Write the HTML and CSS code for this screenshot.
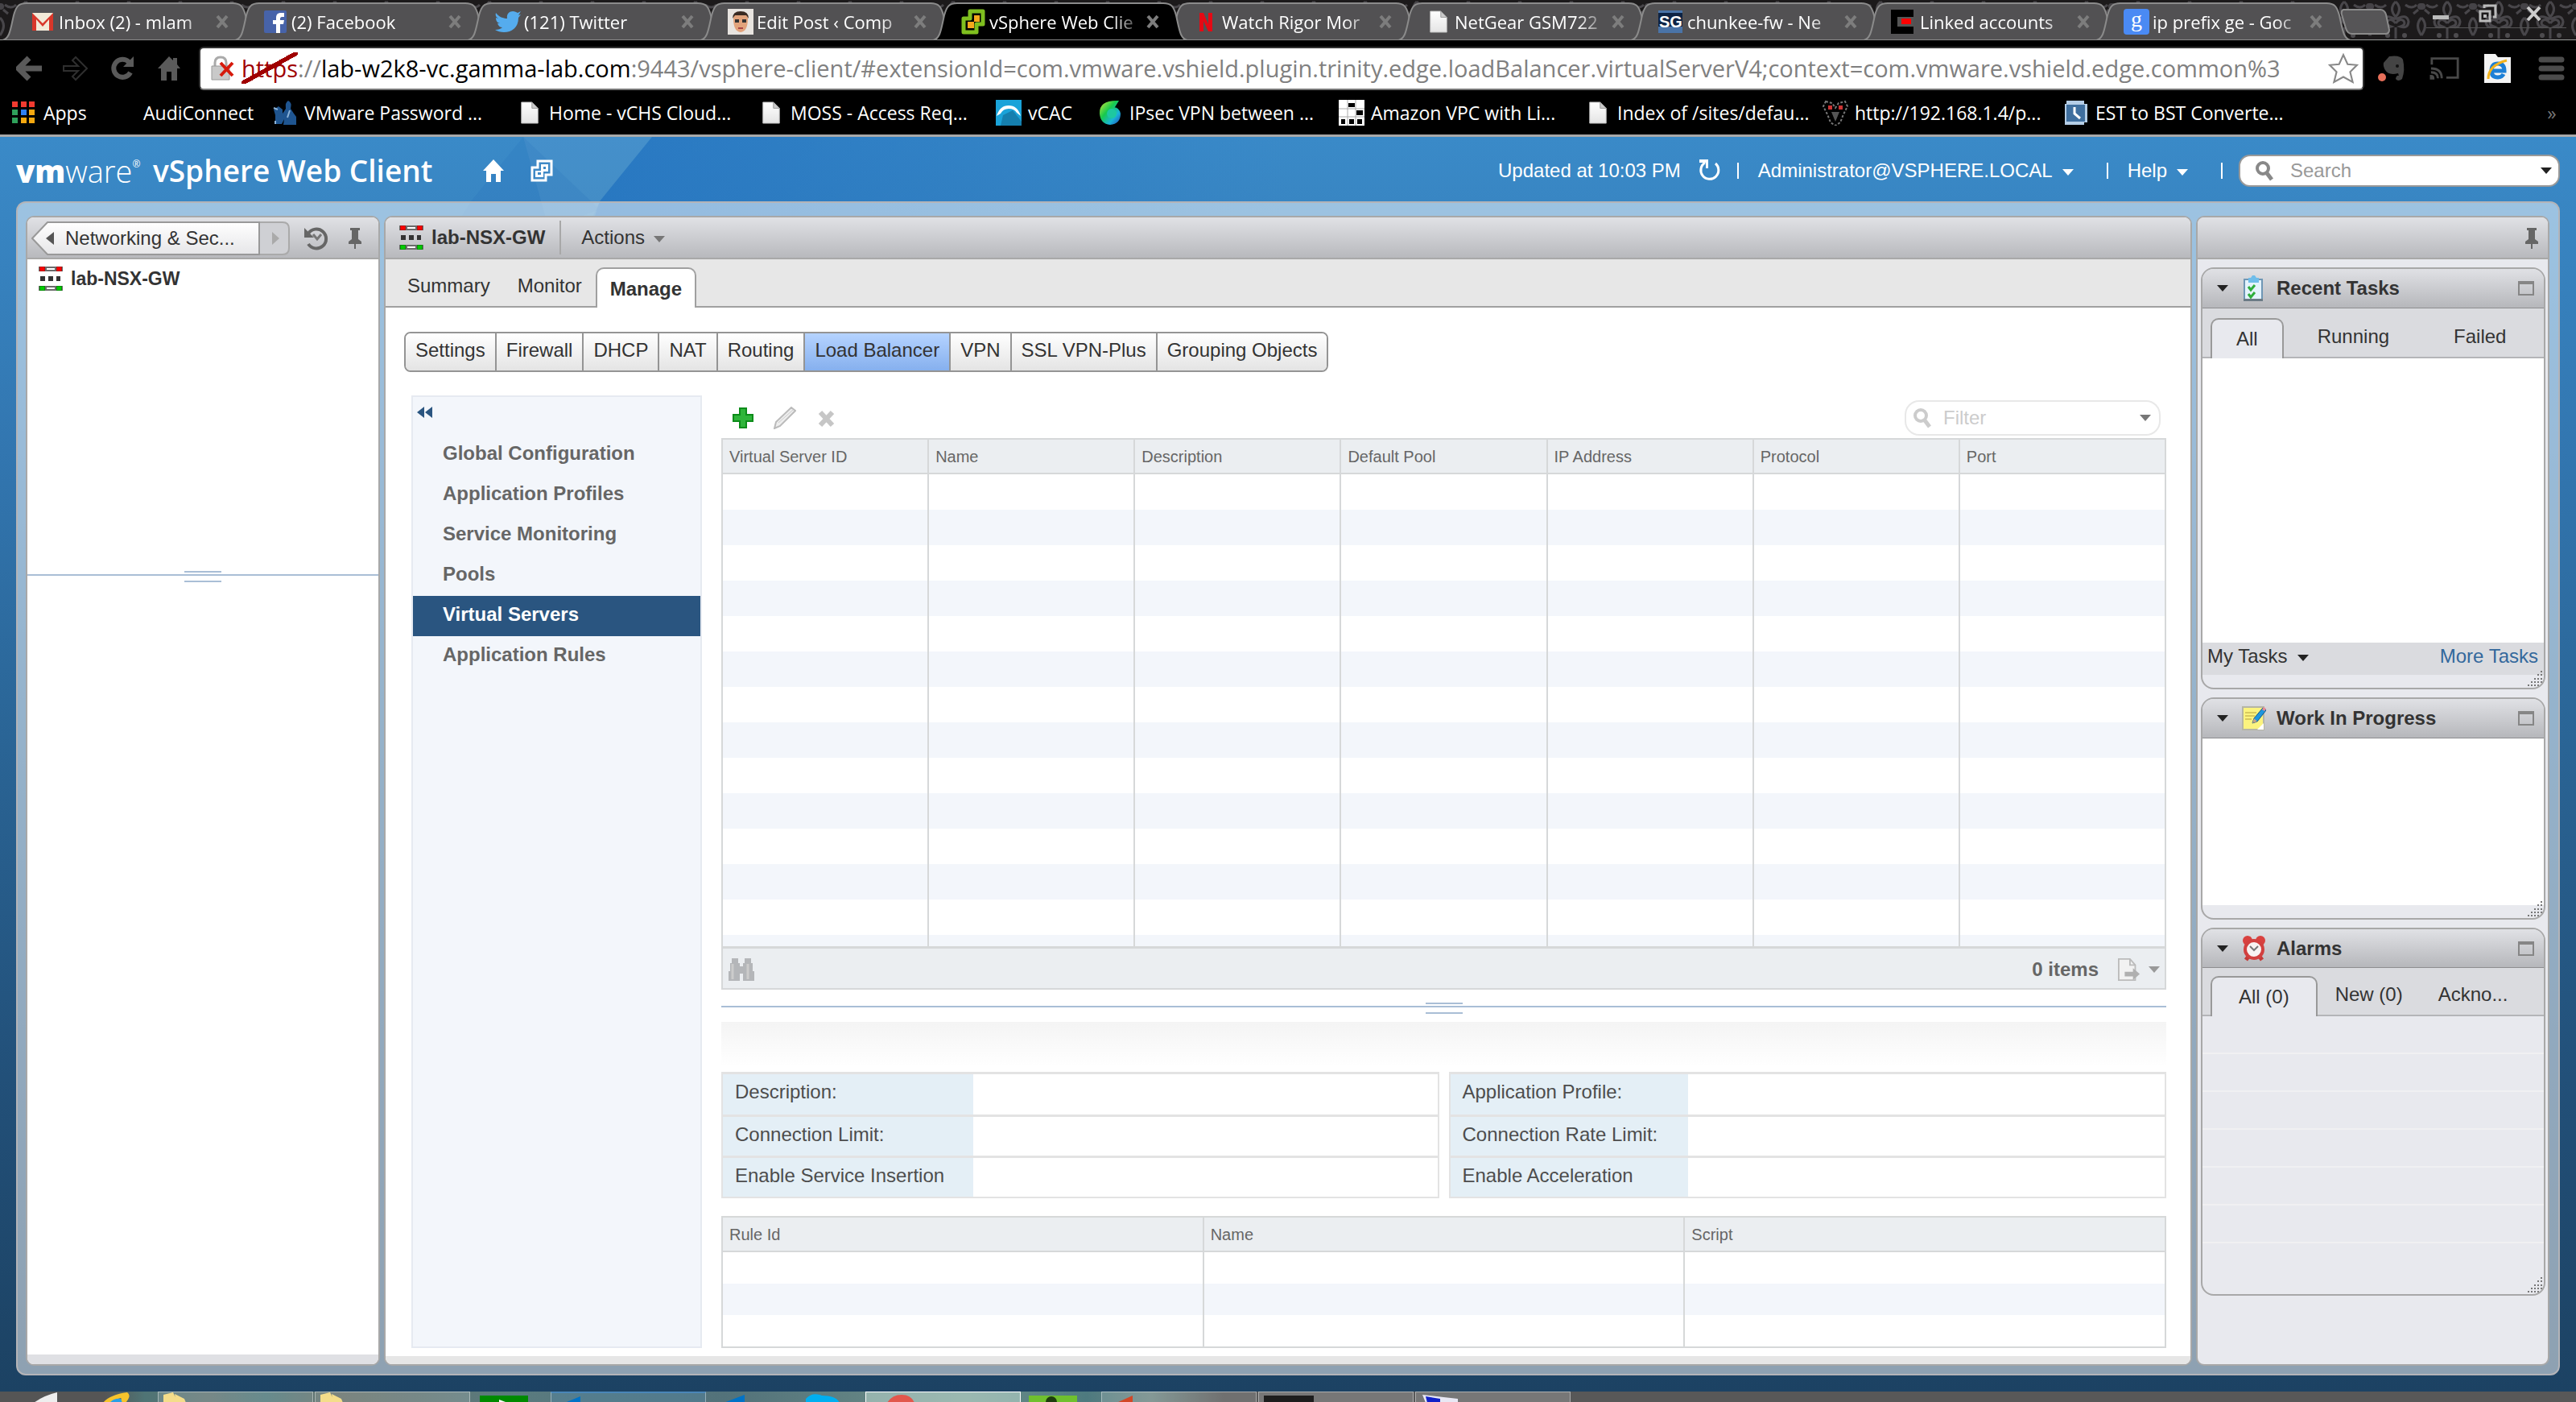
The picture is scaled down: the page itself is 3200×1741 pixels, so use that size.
FILE: index.html
```html
<!DOCTYPE html>
<html lang="en">
<head>
<meta charset="UTF-8">
<meta name="viewport" content="width=device-width, initial-scale=1.0">
<title>vSphere Web Client</title>
<link rel="stylesheet" href="styles.css">
</head>
<body>

<!-- shared shapes -->
<svg class="defs" aria-hidden="true">
    <defs>
        <pattern id="damask" width="64" height="50" patternUnits="userSpaceOnUse">
            <rect width="64" height="50" fill="#1c1a1b"/>
            <path d="M32 2q9 9 0 19q-9-10 0-19M32 24q14-8 16 3q-1 9-10 6q7-2 4-7q-5-4-10 3M32 24q-14-8-16 3q1 9 10 6q-7-2-4-7q5-4 10 3M32 34v14M0 22q9 9 0 22M64 22q-9 9 0 22M6 6q8 6 14 0M44 6q8 6 14 0M4 12l6 5M60 12l-6 5" fill="none" stroke="#48464a" stroke-width="3"/>
            <circle cx="22" cy="44" r="3" fill="#4d4b4e"/><circle cx="43" cy="44" r="3" fill="#4d4b4e"/><circle cx="1" cy="8" r="4" fill="#454347"/><circle cx="63" cy="8" r="4" fill="#454347"/>
        </pattern>
        <linearGradient id="btn" x1="0" y1="0" x2="0" y2="1"><stop offset="0" stop-color="#fff"/><stop offset="1" stop-color="#e6e6e8"/></linearGradient>
        <linearGradient id="page" x1="0" y1="0" x2="0" y2="1"><stop offset="0" stop-color="#fff"/><stop offset="1" stop-color="#e4e4e4"/></linearGradient>
        <linearGradient id="facet" x1="0" y1="0" x2="1" y2="0"><stop offset="0" stop-color="#2272c0" stop-opacity=".8"/><stop offset="1" stop-color="#2272c0" stop-opacity="0"/></linearGradient>
        <linearGradient id="swirl" x1="0" y1="0" x2="1" y2="1"><stop offset="0" stop-color="#d4e93a"/><stop offset=".4" stop-color="#17c94c"/><stop offset=".7" stop-color="#19b5d8"/><stop offset="1" stop-color="#2446b8"/></linearGradient>
    </defs>
    <symbol id="tab-shape" viewBox="0 0 316 47" preserveAspectRatio="none">
        <path d="M0 47C9 45 10 34 14 16C17 5 20 1 30 1H286C296 1 299 5 302 16C306 34 307 45 316 47Z"/>
    </symbol>
    <symbol id="close" viewBox="0 0 18 18"><path d="M3 2l12 14M15 2L3 16" fill="none" stroke="currentColor" stroke-width="4"/></symbol>
    <symbol id="doc" viewBox="0 0 24 30"><path d="M1 1h14l8 8v20H1z" fill="url(#page)" stroke="#bbb"/><path d="M15 1v8h8z" fill="#ccc" stroke="#999"/></symbol>
    <symbol id="edge" viewBox="0 0 30 30">
        <path d="M0 0h30v6H0zM0 24h30v6H0z" fill="#6b6b6b"/>
        <path d="M1 0h7v6H1zM22 0h7v6h-7z" fill="#b01212"/><path d="M2 1h5v4H2zM23 1h5v4h-5z" fill="#f00"/>
        <path d="M1 24h7v6H1zM22 24h7v6h-7z" fill="#0a8f0a"/><path d="M2 25h5v4H2zM23 25h5v4h-5z" fill="#0c0"/>
        <path d="M10 2h10v2H10zM10 26h10v2H10z" fill="#fff"/>
        <path d="M2 12h6v6H2zM12 12h6v6h-6zM22 12h5v6h-5z" fill="#333"/>
    </symbol>
    <symbol id="pin" viewBox="0 0 20 26"><path d="M4 0h12v3h-2v11l4 3v3H2v-3l4-3V3H4z" fill="#666"/><path d="M9 20h2v6H9z" fill="#666"/></symbol>
    <symbol id="max" viewBox="0 0 20 18"><path d="M1 1h18v16H1z" fill="none" stroke="#868686" stroke-width="2"/><path d="M0 0h20v4H0z" fill="#868686"/></symbol>
    <symbol id="grip" viewBox="0 0 18 20">
        <path d="M16 0h2v2h-2zM16 4h2v2h-2zM12 4h2v2h-2zM16 9h2v2h-2zM12 9h2v2h-2zM8 9h2v2H8zM16 13h2v2h-2zM12 13h2v2h-2zM8 13h2v2H8zM4 13h2v2H4zM16 17h2v2h-2zM12 17h2v2h-2zM8 17h2v2H8zM4 17h2v2H4zM0 17h2v2H0z" fill="#777"/>
    </symbol>
    <symbol id="magnify" viewBox="0 0 24 26"><circle cx="10" cy="10" r="7" fill="none" stroke="currentColor" stroke-width="4"/><path d="M15 16l6 8" stroke="currentColor" stroke-width="5"/></symbol>
    <symbol id="folder" viewBox="0 0 40 13"><path d="M0 13V3l12-3 6 13zM14 2l12 6 2 5H16z" fill="#f4dd8a"/></symbol>
</svg>

<!-- browser -->
<header class="browser">
    <div class="tab-strip">
        <svg class="wallpaper" aria-hidden="true"><rect width="100%" height="100%" fill="url(#damask)"/></svg>
        <nav class="tabs" aria-label="Open tabs">
            <div class="tab">
                <svg class="tab-bg"><use href="#tab-shape"/></svg>
                <svg class="fav" viewBox="0 0 32 32"><path d="M3 5h26v22H3z" fill="#f3ead8"/><path d="M3 27V5l13 13L29 5v22h-5V13l-8 9-8-9v14z" fill="#d8372a"/></svg>
                <a href="#" class="tab-label">Inbox (2) - mlam</a><button class="close" aria-label="Close tab"><svg><use href="#close"/></svg></button>
            </div>
            <div class="tab">
                <svg class="tab-bg"><use href="#tab-shape"/></svg>
                <svg class="fav" viewBox="0 0 32 32"><rect x="2" y="2" width="28" height="28" rx="2" fill="#4763a9"/><path d="M17 30V19h-4v-5h4v-3c0-4 2-6 6-6h4v5h-3c-1 0-2 1-2 2v2h5l-1 5h-4v11z" fill="#fff"/></svg>
                <a href="#" class="tab-label">(2) Facebook</a><button class="close" aria-label="Close tab"><svg><use href="#close"/></svg></button>
            </div>
            <div class="tab">
                <svg class="tab-bg"><use href="#tab-shape"/></svg>
                <svg class="fav" viewBox="0 0 32 32"><path d="M1 5c4 5 9 7 14 7C14 6 18 3 22 3c3 0 4 1 6 2l4-2-3 5 3-1-3 4c0 12-8 18-18 18-4 0-8-1-11-3 4 0 7-1 9-3-3 0-5-2-6-5h3c-4-1-5-4-5-7l3 1C1 10 0 8 1 5z" fill="#55acee"/></svg>
                <a href="#" class="tab-label">(121) Twitter</a><button class="close" aria-label="Close tab"><svg><use href="#close"/></svg></button>
            </div>
            <div class="tab">
                <svg class="tab-bg"><use href="#tab-shape"/></svg>
                <svg class="fav" viewBox="0 0 32 32"><path d="M0 0h32v32H0z" fill="#e8e4e0"/><path d="M7 12q0-8 9-8t9 8q0 16-9 17Q7 28 7 12z" fill="#e2a37c"/><path d="M6 12q0-9 10-9t10 9l-3-4H9z" fill="#3a2a22"/><path d="M9 13h5v4H9zM18 13h5v4h-5z" fill="#333"/><path d="M13 23h6v2h-6z" fill="#a44"/></svg>
                <a href="#" class="tab-label">Edit Post ‹ Comp</a><button class="close" aria-label="Close tab"><svg><use href="#close"/></svg></button>
            </div>
            <div class="tab active">
                <svg class="tab-bg"><use href="#tab-shape"/></svg>
                <svg class="fav" viewBox="0 0 32 32"><path d="M12 3h16v16h-8v10H4V12h8z" fill="none" stroke="#7fbf1f" stroke-width="5" stroke-linejoin="round"/><path d="M17 8h7v8h-7v8h-8v-8h8z" fill="#f6a81c"/></svg>
                <a href="#" class="tab-label">vSphere Web Clie</a><button class="close" aria-label="Close tab"><svg><use href="#close"/></svg></button>
            </div>
            <div class="tab">
                <svg class="tab-bg"><use href="#tab-shape"/></svg>
                <svg class="fav" viewBox="0 0 32 32"><path d="M8 5h5l6 14V5h5v23h-5l-6-13v13H8z" fill="#e50914"/></svg>
                <a href="#" class="tab-label">Watch Rigor Mor</a><button class="close" aria-label="Close tab"><svg><use href="#close"/></svg></button>
            </div>
            <div class="tab">
                <svg class="tab-bg"><use href="#tab-shape"/></svg>
                <svg class="fav"><use href="#doc" width="32" height="28" y="2"/></svg>
                <a href="#" class="tab-label">NetGear GSM722</a><button class="close" aria-label="Close tab"><svg><use href="#close"/></svg></button>
            </div>
            <div class="tab">
                <svg class="tab-bg"><use href="#tab-shape"/></svg>
                <svg class="fav" viewBox="0 0 32 32"><path d="M0 2h30v28H0z" fill="#0d2344"/><path d="M0 22h30v8H0zM0 2h30v3H0z" fill="#4a74a8"/><text x="1" y="23" class="fav-text">SG</text></svg>
                <a href="#" class="tab-label">chunkee-fw - Ne</a><button class="close" aria-label="Close tab"><svg><use href="#close"/></svg></button>
            </div>
            <div class="tab">
                <svg class="tab-bg"><use href="#tab-shape"/></svg>
                <svg class="fav" viewBox="0 0 32 32"><path d="M0 1h28v30H0z" fill="#000"/><path d="M8 10h20v12H8z" fill="#555"/><path d="M13 12h12v7H13z" fill="#f00"/></svg>
                <a href="#" class="tab-label">Linked accounts</a><button class="close" aria-label="Close tab"><svg><use href="#close"/></svg></button>
            </div>
            <div class="tab">
                <svg class="tab-bg"><use href="#tab-shape"/></svg>
                <svg class="fav" viewBox="0 0 32 32"><rect width="32" height="32" rx="4" fill="#4a8af4"/><text x="9" y="22" class="fav-g">g</text></svg>
                <a href="#" class="tab-label">ip prefix ge - Goc</a><button class="close" aria-label="Close tab"><svg><use href="#close"/></svg></button>
            </div>
            <button class="new-tab" aria-label="New tab"><svg viewBox="0 0 62 32"><path d="M4 1h46q5 0 7 6l4 19q0 5-5 5H15q-6 0-8-7L2 7q-1-5 2-6z" fill="#565557" stroke="#8a8a8a" stroke-width="2"/></svg></button>
        </nav>
        <div class="window-buttons">
            <button aria-label="Minimize"><svg viewBox="0 0 24 24"><path d="M2 14h20v5H2z" fill="#bbb"/></svg></button>
            <button aria-label="Restore"><svg viewBox="0 0 24 24"><path d="M8 5V2h14v14h-3M3 9h12v12H3z" fill="none" stroke="#bbb" stroke-width="3"/><path d="M7 13h4v4H7z" fill="#bbb"/></svg></button>
            <button aria-label="Close"><svg viewBox="0 0 24 24"><path d="M4 4l15 16M19 4L4 20" stroke="#ccc" stroke-width="4"/></svg></button>
        </div>
    </div>

    <div class="toolbar">
        <button aria-label="Back"><svg viewBox="0 0 32 32"><path d="M16 3L3 16l13 13M4 16h28" fill="none" stroke="#5a5a5a" stroke-width="7"/></svg></button>
        <button aria-label="Forward"><svg viewBox="0 0 32 32"><path d="M16 2l14 14-14 14-4-4 7-7H1v-6h18l-7-7z" fill="#000" stroke="#2f2f2f" stroke-width="2"/></svg></button>
        <button aria-label="Reload"><svg viewBox="0 0 32 32"><path d="M26 21a11 11 0 1 1-2-13" fill="none" stroke="#5a5a5a" stroke-width="6"/><path d="M30 1v13H17z" fill="#5a5a5a"/></svg></button>
        <button aria-label="Home"><svg viewBox="0 0 32 32"><path d="M16 1l5 5V3h5v8l4 5h-4v15h-7V20h-6v11H6V16H2z" fill="#5a5a5a"/></svg></button>
        <div class="address">
            <svg class="lock" viewBox="0 0 30 32"><path d="M5 14V9q0-7 7-7t7 7v5" fill="none" stroke="#aaa" stroke-width="3"/><path d="M1 13h22v17H1z" fill="#c9c9c9" stroke="#999"/><path d="M12 9l15 16M27 9L12 25" stroke="#d61a0c" stroke-width="4"/></svg>
            <div class="url"><span class="bad">https</span>://<b>lab-w2k8-vc.gamma-lab.com</b>:9443/vsphere-client/#extensionId=com.vmware.vshield.plugin.trinity.edge.loadBalancer.virtualServerV4;context=com.vmware.vshield.edge.common%3</div>
            <svg class="star" viewBox="0 0 36 36"><path d="M18 2l5 11 11 1-8 8 3 12-11-6-11 6 3-12-8-8 11-1z" fill="#fff" stroke="#888" stroke-width="2"/></svg>
        </div>
        <div class="extensions">
            <svg viewBox="0 0 36 36"><path d="M8 11l7-8q14-2 17 4 3 13-1 24-5 4-8 0 1-5 4-4l-1-3q-12 3-16-4-3-5-2-9z" fill="#444"/><circle cx="25" cy="15" r="2" fill="#111"/><circle cx="6" cy="29" r="5" fill="#e8705a"/></svg>
            <svg viewBox="0 0 40 36"><path d="M3 13V5h34v25H22" fill="none" stroke="#484848" stroke-width="3"/><path d="M2 31v-3q3 0 3 3zM2 23q9 0 9 8M2 18q14 0 14 13" fill="none" stroke="#484848" stroke-width="3"/></svg>
            <svg viewBox="0 0 36 36"><path d="M1 4V0h14l3 4h16v32H1z" fill="#f4f4f4"/><path d="M10 21h16q0-9-8-9t-8 9q0 8 8 8 5 0 7-4" fill="none" stroke="#1d7fd6" stroke-width="5"/><path d="M6 31Q6 14 29 8" fill="none" stroke="#f3b21c" stroke-width="3"/></svg>
            <svg viewBox="0 0 32 36"><path d="M4 7h25M4 18h25M4 29h25" stroke="#4c4c4c" stroke-width="7" stroke-linecap="round"/></svg>
        </div>
    </div>

    <nav class="bookmarks" aria-label="Bookmarks">
        <a href="#"><svg viewBox="0 0 32 32"><path d="M1 2h7v7H1zM12 2h7v7h-7zM22 2h7v7h-7z" fill="#f23b30"/><path d="M1 12h7v7H1zM1 22h7v7H1z" fill="#2fa15b"/><path d="M12 12h7v7h-7z" fill="#2e80f2"/><path d="M22 12h7v7h-7zM12 22h7v7h-7zM22 22h7v7h-7z" fill="#f5a80f"/></svg>Apps</a>
        <a href="#"><svg viewBox="0 0 32 32"></svg>AudiConnect</a>
        <a href="#"><svg viewBox="0 0 32 32"><path d="M2 12l6-4 5 4v5l4-6q-1-8 3-10 5 2 3 10l4 6 3 4v10H14l1-7-3 6H4V19z" fill="#1f5590"/><path d="M2 10l5 2M22 13l-3 9M4 26v4" stroke="#8db3d8" stroke-width="2"/></svg>VMware Password ...</a>
        <a href="#"><svg viewBox="0 0 32 32"><use href="#doc" width="32" height="28" y="2"/></svg>Home - vCHS Cloud...</a>
        <a href="#"><svg viewBox="0 0 32 32"><use href="#doc" width="32" height="28" y="2"/></svg>MOSS - Access Req...</a>
        <a href="#"><svg viewBox="0 0 32 32"><path d="M0 0h32v32H0z" fill="#1aa3d9"/><path d="M1 20Q5 7 16 7t15 13l-5-4q-3-5-10-5T6 17z" fill="#fff"/><path d="M6 32l3-13 12-6 11 14v5z" fill="#157fae"/></svg>vCAC</a>
        <a href="#"><svg viewBox="0 0 32 32"><path d="M27 1Q2 0 3 17q1 13 13 14 13-1 13-14Q27 9 20 9q-6 3-3 8" fill="url(#swirl)"/><circle cx="18" cy="17" r="6" fill="#1ec8a0"/></svg>IPsec VPN between ...</a>
        <a href="#"><svg viewBox="0 0 32 32"><path d="M0 0h32v32H0z" fill="#fff"/><path d="M0 11h32M0 21h32M11 0v32M21 0v32" stroke="#aaa"/><path d="M12 4h8v5h-8zM22 13h8v6h-8zM3 24h5v6H3zM13 24h6v6h-6zM23 24h6v6h-6z" fill="#000"/></svg>Amazon VPC with Li...</a>
        <a href="#"><svg viewBox="0 0 32 32"><use href="#doc" width="32" height="28" y="2"/></svg>Index of /sites/defau...</a>
        <a href="#"><svg viewBox="0 0 32 32"><path d="M4 2l8 2 4 6 4-6 8-2 3 6-5 10-4 10-6 4-6-4-4-10L1 8z" fill="none" stroke="#777" stroke-width="2" stroke-dasharray="3 2"/><path d="M7 7h5v5H7zM20 7h5v5h-5z" fill="#c33"/><path d="M11 15h10l-5 12z" fill="#555"/></svg>http://192.168.1.4/p...</a>
        <a href="#"><svg viewBox="0 0 32 32"><path d="M4 1h22v4h4v23h-4v3H2V5h2z" fill="#b4cde6"/><path d="M4 6h23v21H4z" fill="#3f6f9f"/><path d="M14 9v8l7 6" fill="none" stroke="#fff" stroke-width="3"/></svg>EST to BST Converte...</a>
        <button class="overflow" aria-label="More bookmarks">»</button>
    </nav>
</header>

<!-- web client -->
<div class="client">
    <svg class="facets" viewBox="0 0 1600 400" aria-hidden="true">
        <path d="M650 0L810 0L745 80L700 180Z" fill="#fff" fill-opacity=".06"/>
        <path d="M650 0L585 80L530 170L745 90Z" fill="#1766b4" fill-opacity=".12"/>
        <path d="M810 0H1600V400H640L745 80Z" fill="url(#facet)"/>
    </svg>
    <header class="masthead">
        <div class="brand"><span class="vm">vm</span><span class="ware">ware</span><sup>®</sup></div>
        <h1>vSphere Web Client</h1>
        <a href="#" class="head-icon" aria-label="Home"><svg viewBox="0 0 28 28"><path d="M14 0l13 14h-4v14h-6V18h-6v10H5V14H1z" fill="#fff"/></svg></a>
        <a href="#" class="head-icon" aria-label="vCenter"><svg viewBox="0 0 28 28"><path d="M9 2h17v17h-7v7H2V10h7z" fill="none" stroke="#fff" stroke-width="3"/><path d="M13 6h9v9h-6v7H6v-8h7zM16 9v3h3V9zM9 16v3h4v-3z" fill="#fff" fill-rule="evenodd"/></svg></a>
        <div class="session">
            <span>Updated at 10:03 PM</span>
            <button class="refresh" aria-label="Refresh"><svg viewBox="0 0 28 28"><path d="M8 4a11 11 0 1 0 13 1" fill="none" stroke="#fff" stroke-width="3"/><path d="M1 0h11v11h-3V4H1z" fill="#fff"/></svg></button>
            <span class="bar"></span>
            <button class="user">Administrator@VSPHERE.LOCAL<i class="caret"></i></button>
            <span class="bar"></span>
            <button class="help">Help<i class="caret"></i></button>
            <span class="bar"></span>
            <label class="search"><svg><use href="#magnify"/></svg><input type="text" placeholder="Search" aria-label="Search"><i class="caret dark"></i></label>
        </div>
    </header>

    <div class="shell">
        <aside class="panel navigator">
            <div class="panel-head">
                <div class="crumbs">
                    <svg viewBox="0 0 322 42" preserveAspectRatio="none" aria-hidden="true"><path d="M283 1h29q8 0 8 8v24q0 8-8 8h-29z" fill="#cfd0d4" stroke="#aaa" stroke-width="2"/><path d="M283 1H20L1 21l19 20h263z" fill="url(#btn)" stroke="#999" stroke-width="2"/></svg>
                    <button class="crumb"><i class="left"></i>Networking &amp; Sec...</button>
                    <button class="crumb-next" aria-label="Forward"><i class="right"></i></button>
                </div>
                <button aria-label="History"><svg class="history" viewBox="0 0 34 30"><path d="M6 9a12 12 0 1 1 0 13" fill="none" stroke="#666" stroke-width="4"/><path d="M1 2v12h12z" fill="#666"/><path d="M12 10l5 6 5-6" fill="none" stroke="#777" stroke-width="3"/></svg></button>
                <button aria-label="Pin"><svg class="pin"><use href="#pin"/></svg></button>
            </div>
            <a href="#" class="tree-item"><svg class="edge"><use href="#edge"/></svg>lab-NSX-GW</a>
            <div class="splitter"></div>
            <div class="tree-rest"></div>
            <div class="panel-foot"></div>
        </aside>

        <main class="panel workspace">
            <div class="panel-head">
                <svg class="edge"><use href="#edge"/></svg>
                <h2>lab-NSX-GW</h2>
                <button class="actions">Actions<i class="caret gray"></i></button>
            </div>
            <nav class="main-tabs">
                <a href="#">Summary</a><a href="#">Monitor</a><a href="#" class="current">Manage</a>
            </nav>
            <div class="work">
                <div class="sub-tabs">
                    <button>Settings</button><button>Firewall</button><button>DHCP</button><button>NAT</button><button>Routing</button><button class="current">Load Balancer</button><button>VPN</button><button>SSL VPN-Plus</button><button>Grouping Objects</button>
                </div>
                <div class="columns">
                    <nav class="side-nav">
                        <button class="collapse" aria-label="Collapse"><svg viewBox="0 0 20 14"><path d="M9 0v14L0 7zM19 0v14l-9-7z" fill="#2a5580"/></svg></button>
                        <a href="#">Global Configuration</a>
                        <a href="#">Application Profiles</a>
                        <a href="#">Service Monitoring</a>
                        <a href="#">Pools</a>
                        <a href="#" class="current">Virtual Servers</a>
                        <a href="#">Application Rules</a>
                    </nav>
                    <section class="detail">
                        <div class="grid-tools">
                            <button aria-label="Add"><svg viewBox="0 0 28 28"><path d="M10 2h8v8h8v8h-8v8h-8v-8H2v-8h8z" fill="#2fb53a" stroke="#0c8c1a" stroke-width="2"/></svg></button>
                            <button aria-label="Edit" disabled><svg viewBox="0 0 28 28"><path d="M1 27l2-8L22 1l5 4L8 24z" fill="#eee" stroke="#bbb" stroke-width="2"/><path d="M6 20L24 4" stroke="#ccc"/></svg></button>
                            <button aria-label="Delete" disabled><svg viewBox="0 0 28 28"><path d="M6 7l15 16M21 7L6 23" stroke="#c6c6c6" stroke-width="6"/></svg></button>
                            <label class="filter"><svg><use href="#magnify"/></svg><input type="text" placeholder="Filter" aria-label="Filter"><i class="caret gray"></i></label>
                        </div>
                        <div class="grid-box">
                            <table class="grid servers">
                                <thead><tr><th>Virtual Server ID</th><th>Name</th><th>Description</th><th>Default Pool</th><th>IP Address</th><th>Protocol</th><th>Port</th></tr></thead>
                                <tbody data-rows="14"></tbody>
                            </table>
                        </div>
                        <div class="grid-foot">
                            <button aria-label="Find"><svg viewBox="0 0 32 28"><path d="M4 0h8v6h2v4h4V6h2V0h8v6h2v10h2v12H18v-9h-4v9H0V16h2V6h2z" fill="#b4b6b9"/><path d="M5 7v19M24 7v19" stroke="#ccc" stroke-width="3"/></svg></button>
                            <span>0 items</span>
                            <button class="export" aria-label="Export"><svg viewBox="0 0 30 30"><path d="M1 1h15l7 8v20H1z" fill="#f2f2f2" stroke="#bbb" stroke-width="2"/><path d="M16 1v8h7" fill="none" stroke="#bbb" stroke-width="2"/><path d="M9 18h11v-5l9 8-9 8v-5H9z" fill="#b0b0b0"/></svg><i class="caret light"></i></button>
                        </div>
                        <div class="splitter"></div>
                        <div class="shade"></div>
                        <div class="forms">
                            <dl>
                                <div><dt>Description:</dt><dd></dd></div>
                                <div><dt>Connection Limit:</dt><dd></dd></div>
                                <div><dt>Enable Service Insertion</dt><dd></dd></div>
                            </dl>
                            <dl>
                                <div><dt>Application Profile:</dt><dd></dd></div>
                                <div><dt>Connection Rate Limit:</dt><dd></dd></div>
                                <div><dt>Enable Acceleration</dt><dd></dd></div>
                            </dl>
                        </div>
                        <table class="grid rules">
                            <thead><tr><th>Rule Id</th><th>Name</th><th>Script</th></tr></thead>
                            <tbody data-rows="3"></tbody>
                        </table>
                    </section>
                </div>
            </div>
            <div class="panel-foot"></div>
        </main>

        <aside class="panel side">
            <div class="panel-head"><button aria-label="Pin"><svg class="pin"><use href="#pin"/></svg></button></div>
            <section class="portlet tasks">
                <div class="portlet-head">
                    <i class="caret dark"></i>
                    <svg viewBox="0 0 30 32"><path d="M3 5h22v26H3z" fill="#e4f3fc" stroke="#6f97b5" stroke-width="2"/><path d="M8 3h3l2-3h3l2 3h3v6H8z" fill="#6fbdea"/><path d="M8 14l3 4 5-6M8 23l3 4 5-6" fill="none" stroke="#2fae3c" stroke-width="3"/><path d="M2 29h24v3H2z" fill="#6b7a85"/></svg>
                    <h3>Recent Tasks</h3><button aria-label="Maximize"><svg class="max"><use href="#max"/></svg></button>
                </div>
                <nav class="portlet-tabs"><a href="#" class="current">All</a><a href="#">Running</a><a href="#">Failed</a></nav>
                <div class="portlet-body"></div>
                <div class="task-bar"><button>My Tasks<i class="caret dark"></i></button><a href="#">More Tasks</a></div>
                <div class="portlet-foot"><svg><use href="#grip"/></svg></div>
            </section>
            <section class="portlet wip">
                <div class="portlet-head">
                    <i class="caret dark"></i>
                    <svg viewBox="0 0 30 32"><path d="M1 2h26v28H1z" fill="#fbf37f" stroke="#b5b5a5" stroke-width="2"/><path d="M4 9h14M4 13h12M4 17h8" stroke="#d8c95e" stroke-width="2"/><path d="M19 30l8-8v8z" fill="#fff"/><path d="M13 22l2-6L26 3l4 3-11 14z" fill="#1d97e0" stroke="#14588a"/><path d="M25 5l2-3 3 2-2 3z" fill="#e88a96"/><path d="M13 22l2-6 4 4z" fill="#c9a583"/></svg>
                    <h3>Work In Progress</h3><button aria-label="Maximize"><svg class="max"><use href="#max"/></svg></button>
                </div>
                <div class="portlet-body"></div>
                <div class="portlet-foot"><svg><use href="#grip"/></svg></div>
            </section>
            <section class="portlet alarms">
                <div class="portlet-head">
                    <i class="caret dark"></i>
                    <svg viewBox="0 0 30 32"><circle cx="7" cy="6" r="6" fill="#d9413f"/><circle cx="23" cy="6" r="6" fill="#d9413f"/><path d="M5 30l5-7M25 30l-5-7" stroke="#c43a38" stroke-width="5"/><circle cx="15" cy="17" r="11" fill="#f8f3f2" stroke="#d2403f" stroke-width="4"/><path d="M10 13l5 5 5-5" fill="none" stroke="#777" stroke-width="2"/></svg>
                    <h3>Alarms</h3><button aria-label="Maximize"><svg class="max"><use href="#max"/></svg></button>
                </div>
                <nav class="portlet-tabs"><a href="#" class="current">All (0)</a><a href="#">New (0)</a><a href="#">Ackno...</a></nav>
                <div class="portlet-body"></div>
                <div class="portlet-foot"><svg><use href="#grip"/></svg></div>
            </section>
        </aside>
    </div>
</div>

<!-- desktop taskbar -->
<footer class="taskbar">
    <button class="plain" aria-label="Start"><svg viewBox="0 0 74 13"><path d="M42 13q12-9 29-13v13z" fill="#eee"/></svg></button>
    <button class="plain" aria-label="Internet Explorer"><svg viewBox="0 0 74 13"><path d="M30 13q8-10 30-13 6 4-2 13h-8q4-5 2-6-8 2-12 6z" fill="#f6c42c"/><path d="M38 13q6-6 14-5l2 5z" fill="#2a9fe6"/></svg></button>
    <button class="task" aria-label="Folder"><svg viewBox="0 0 40 13"><use href="#folder"/></svg></button>
    <button class="task" aria-label="Folder"><svg viewBox="0 0 40 13"><use href="#folder"/></svg></button>
    <button class="plain" aria-label="Store"><svg viewBox="0 0 74 13"><path d="M10 4h60v9H10z" fill="#008a00"/><path d="M34 9l8 3-8 1z" fill="#fff"/></svg></button>
    <button class="task blue" aria-label="Outlook"><svg viewBox="0 0 40 13"><path d="M8 13l22-9v9z" fill="#0072c6"/></svg></button>
    <button class="plain" aria-label="Outlook"><svg viewBox="0 0 74 13"><path d="M20 13l26-10v10z" fill="#0072c6"/></svg></button>
    <button class="plain" aria-label="Skype"><svg viewBox="0 0 74 13"><path d="M24 13V8q8-9 20-4 18 0 22 9z" fill="#00aff0"/></svg></button>
    <button class="task light" aria-label="Chrome"><svg viewBox="0 0 60 13"><path d="M20 13q6-10 18-10t16 10z" fill="#e2574c"/></svg></button>
    <button class="plain" aria-label="Notes"><svg viewBox="0 0 74 13"><path d="M8 4h60v9H8z" fill="#6fc02e"/><circle cx="36" cy="12" r="7" fill="#1e3d0d"/></svg></button>
    <button class="task" aria-label="PowerPoint"><svg viewBox="0 0 40 13"><path d="M12 13l20-9v9z" fill="#d24726"/></svg></button>
    <button class="task gray" aria-label="Terminal"><svg viewBox="0 0 80 13"><path d="M0 4h62v9H0z" fill="#1d1d1d"/></svg></button>
    <button class="task gray" aria-label="Remote desktop"><svg viewBox="0 0 60 13"><path d="M2 3l44 5v5H6z" fill="#e8e8f4"/><path d="M6 5l18 3v5H8z" fill="#1020c8"/></svg></button>
</footer>

<script>
    // the lists have no data yet, so pad them with empty striped rows
    document.querySelectorAll('tbody[data-rows]').forEach((body) => {
        const cols = body.parentElement.querySelectorAll('th').length;
        for (let i = 0; i < Number(body.dataset.rows); i++) {
            const row = body.insertRow();
            for (let c = 0; c < cols; c++) { row.insertCell(); }
        }
    });
</script>

</body>
</html>
```
FILE: styles.css
```css
* {
    box-sizing: border-box;
    margin: 0;
    padding: 0;
}

body {
    display: flex;
    flex-direction: column;
    height: 100vh;
    overflow: hidden;
    font: 24px/30px "Liberation Sans", Arial, sans-serif;
    color: #333;
    background: #000;
}

a {
    color: inherit;
    text-decoration: none;
}

button {
    font: inherit;
    color: inherit;
    background: none;
    border: 0;
}

svg {
    display: block;
    flex: none;
}

input {
    font: inherit;
    border: 0;
    outline: 0;
    background: none;
    min-width: 0;
    flex: 1;
}

input::placeholder {
    color: #999;
}

.defs {
    position: absolute;
    width: 0;
    height: 0;
}

/* browser */
.browser {
    flex: none;
    font-family: "Open Sans", "Noto Sans", sans-serif;
    color: #fff;
    border-bottom: 3px solid #a9a9a9;
}

.tab-strip {
    position: relative;
    display: flex;
    justify-content: space-between;
    height: 50px;
    border-bottom: 1px solid #999;
}

.wallpaper {
    position: absolute;
    width: 100%;
    height: 100%;
}

.tabs {
    position: relative;
    display: flex;
    padding: 3px 0 0 3px;
}

.tab {
    position: relative;
    display: flex;
    align-items: center;
    width: 316px;
    height: 47px;
    margin-right: -27px;
    padding: 0 34px 0 34px;
}

.tab-bg {
    position: absolute;
    left: 0;
    top: 0;
    width: 100%;
    height: 100%;
    fill: #525153;
    stroke: #8b8b8b;
    stroke-width: 2;
}

.tab.active {
    z-index: 1;
}

.active .tab-bg {
    fill: #000;
}

.fav {
    position: relative;
    width: 32px;
    height: 32px;
    margin-right: 4px;
}

.fav-text {
    font: bold 20px "Liberation Sans", sans-serif;
    fill: #fff;
}

.fav-g {
    font: 28px "Liberation Serif", serif;
    fill: #fff;
}

.tab-label {
    position: relative;
    flex: 1;
    min-width: 0;
    font-size: 22px;
    white-space: nowrap;
    -webkit-mask-image: linear-gradient(90deg, #000 82%, transparent 104%);
    mask-image: linear-gradient(90deg, #000 82%, transparent 104%);
}

.close {
    position: relative;
    margin-left: 8px;
    color: #7d7d7d;
}

.close svg {
    width: 18px;
    height: 18px;
}

.new-tab {
    align-self: flex-start;
    position: relative;
    margin: 8px 0 0 14px;
}

.new-tab svg {
    width: 62px;
    height: 32px;
}

.window-buttons {
    position: relative;
    display: flex;
    height: 35px;
    margin-right: 12px;
    border-bottom: 1px solid #555;
}

.window-buttons button {
    width: 58px;
    padding-left: 6px;
}

.window-buttons svg {
    width: 24px;
    height: 24px;
}

.toolbar {
    display: flex;
    align-items: center;
    height: 70px;
    padding: 0 12px 0 20px;
}

.toolbar > button {
    width: 58px;
}

.toolbar > button svg {
    width: 32px;
    height: 32px;
}

.address {
    display: flex;
    align-items: center;
    flex: 1;
    min-width: 0;
    height: 54px;
    margin: 0 15px 0 -5px;
    padding: 0 5px 0 13px;
    background: #fff;
    border: 2px solid #333;
    border-bottom-color: #777;
    border-radius: 6px;
}

.lock {
    width: 30px;
    height: 32px;
    margin-right: 8px;
}

.url {
    flex: 1;
    min-width: 0;
    overflow: hidden;
    white-space: nowrap;
    font-size: 29px;
    line-height: 40px;
    color: #808080;
}

.url b {
    font-weight: normal;
    color: #000;
}

.bad {
    color: #a00000;
    background: linear-gradient(to top left, transparent 46%, #a00000 46%, #a00000 54%, transparent 54%);
}

.star {
    width: 38px;
    height: 38px;
}

.extensions {
    display: flex;
    align-items: center;
    gap: 28px;
}

.extensions svg {
    width: 38px;
    height: 36px;
}

.bookmarks {
    display: grid;
    grid-template-columns: 124px 200px 304px 300px 295px 126px 300px 306px 295px 299px 1fr 40px;
    align-items: center;
    height: 47px;
    padding: 0 10px 8px 14px;
    font-size: 23px;
}

.bookmarks a {
    display: flex;
    align-items: center;
    gap: 8px;
    white-space: nowrap;
}

.bookmarks svg {
    width: 32px;
    height: 32px;
}

.overflow {
    color: #777;
}

/* client */
.client {
    position: relative;
    flex: 1;
    min-height: 0;
    display: flex;
    flex-direction: column;
    padding: 0 20px 20px;
    background: linear-gradient(#3a8ac8, #3276b0 25%, #2b6799 45%, #225079 75%, #1c4263);
}

.facets {
    position: absolute;
    left: 0;
    top: 0;
    width: 1600px;
    height: 400px;
}

.masthead {
    position: relative;
    display: flex;
    align-items: center;
    height: 80px;
    color: #fff;
    padding-top: 4px;
}

.brand {
    display: flex;
    align-items: center;
    width: 170px;
    font: 38px/44px "Open Sans", sans-serif;
}

.vm {
    font-weight: 800;
}

.ware {
    font-weight: 300;
}

.brand sup {
    align-self: flex-start;
    font-size: 12px;
    line-height: 28px;
}

h1 {
    width: 408px;
    font: 600 37px/44px "Open Sans", sans-serif;
    white-space: nowrap;
}

.head-icon {
    width: 60px;
}

.head-icon svg {
    width: 30px;
    height: 28px;
}

.session {
    display: flex;
    align-items: center;
    margin-left: auto;
}

.session .refresh {
    margin: 0 20px 0 22px;
}

.session svg {
    width: 28px;
    height: 28px;
}

.bar {
    width: 2px;
    height: 20px;
    background: #fff;
}

.user, .help {
    margin: 0 41px 0 24px;
}

.caret {
    display: inline-block;
    vertical-align: middle;
    margin-left: 12px;
    border: 7px solid transparent;
    border-top: 8px solid #fff;
    border-bottom: 0;
}

.caret.dark {
    border-top-color: #222;
}

.caret.gray {
    border-top-color: #777;
}

.caret.light {
    border-top-color: #999;
    margin-left: 8px;
}

.search {
    display: flex;
    align-items: center;
    width: 399px;
    height: 40px;
    margin-left: 20px;
    padding: 0 8px 0 18px;
    color: #888;
    background: #fff;
    border: 2px solid #999;
    border-radius: 14px;
}

.search svg, .filter svg {
    width: 24px;
    height: 26px;
    margin-right: 20px;
}

.shell {
    position: relative;
    flex: 1;
    min-height: 0;
    display: flex;
    gap: 5px;
    padding: 16px 11px 10px 10px;
    background: rgba(255, 255, 255, .5);
    border: 2px solid #b4b4b8;
    border-radius: 12px;
}

.panel {
    display: flex;
    flex-direction: column;
    min-height: 0;
    overflow: hidden;
    background: #fff;
    border: 2px solid #a8a8a8;
    border-radius: 10px;
}

.panel-head {
    display: flex;
    align-items: center;
    flex: none;
    height: 52px;
    background: linear-gradient(#e0e1e5, #b8b9bd);
    border-bottom: 2px solid #a8a8a8;
}

.panel-foot {
    flex: none;
    height: 10px;
    background: #e6e6e6;
}

.edge {
    width: 30px;
    height: 30px;
}

.pin {
    width: 20px;
    height: 26px;
}

/* navigator */
.navigator {
    flex: none;
    width: 440px;
}

.navigator .panel-head {
    padding: 2px 0 0 5px;
}

.crumbs {
    position: relative;
    display: flex;
    align-items: center;
    width: 322px;
    height: 42px;
    margin-right: 16px;
}

.crumbs svg {
    position: absolute;
    width: 100%;
    height: 100%;
}

.crumb {
    position: relative;
    width: 283px;
    padding-left: 18px;
    text-align: left;
}

.crumb-next {
    position: relative;
    padding-left: 16px;
}

.left, .right {
    display: inline-block;
    border: 8px solid transparent;
}

.left {
    margin-right: 14px;
    border-right: 10px solid #555;
    border-left: 0;
}

.right {
    border-left: 9px solid #aaa;
    border-right: 0;
}

.history {
    width: 34px;
    height: 30px;
    margin-right: 20px;
}

.tree-item {
    display: flex;
    align-items: flex-start;
    gap: 10px;
    height: 391px;
    padding: 9px 14px 0;
    font-size: 23px;
    font-weight: bold;
}

.splitter {
    position: relative;
    flex: none;
    height: 2px;
    background: #a9bed6;
}

.splitter::before {
    content: "";
    position: absolute;
    left: calc(50% - 23px);
    top: -4px;
    width: 46px;
    height: 10px;
    border: solid #a9bed6;
    border-width: 2px 0;
}

.tree-rest {
    flex: 1;
}

.navigator .panel-foot {
    height: 12px;
    background: #dfe0e4;
}

/* workspace */
.workspace {
    flex: 1;
    min-width: 0;
}

.workspace > .panel-head {
    padding-left: 17px;
}

h2 {
    margin-left: 10px;
    padding-right: 18px;
    font-size: 24px;
    line-height: 42px;
    border-right: 2px solid #a8a8a8;
}

.actions {
    margin-left: 25px;
}

.actions .caret {
    margin-left: 11px;
}

.main-tabs {
    display: flex;
    align-items: flex-end;
    flex: none;
    height: 60px;
    padding-left: 10px;
    background: linear-gradient(#a0a0a0, #a0a0a0) bottom / 100% 2px no-repeat #e7e7e7;
}

.main-tabs a {
    height: 50px;
    padding: 0 17px;
    line-height: 46px;
}

.main-tabs .current {
    padding: 0 16px;
    font-weight: bold;
    line-height: 49px;
    background: #fff;
    border: 2px solid #a0a0a0;
    border-bottom: 0;
    border-radius: 10px 10px 0 0;
}

.work {
    flex: 1;
    min-height: 0;
    display: flex;
    flex-direction: column;
    padding: 30px 30px 10px 23px;
}

.sub-tabs {
    display: flex;
    flex: none;
    align-self: flex-start;
    overflow: hidden;
    border: 2px solid #949494;
    border-radius: 8px;
}

.sub-tabs button {
    height: 46px;
    padding: 0 12px 4px;
    border-left: 2px solid #949494;
    background: linear-gradient(#fff, #e4e4e4);
}

.sub-tabs button:first-child {
    border-left: 0;
}

.sub-tabs .current {
    background: linear-gradient(#b5d3ff, #86b0ee);
}

.columns {
    flex: 1;
    min-height: 0;
    display: flex;
    gap: 24px;
    margin-top: 29px;
    padding-left: 9px;
}

.side-nav {
    flex: none;
    width: 361px;
    background: #f3f6fb;
    border: 2px solid #e6eaf1;
}

.collapse {
    display: block;
    height: 47px;
    padding: 0 0 10px 5px;
}

.collapse svg {
    width: 20px;
    height: 14px;
}

.side-nav a {
    display: block;
    height: 50px;
    padding-left: 37px;
    line-height: 46px;
    font-weight: bold;
    color: #666;
}

.side-nav .current {
    color: #fff;
    background: #2a5580;
}

.detail {
    flex: 1;
    min-width: 0;
    display: flex;
    flex-direction: column;
}

.grid-tools {
    display: flex;
    align-items: center;
    flex: none;
    gap: 24px;
    height: 53px;
    padding: 5px 7px 3px 13px;
}

.grid-tools button svg {
    width: 28px;
    height: 28px;
}

.filter {
    display: flex;
    align-items: center;
    width: 318px;
    height: 44px;
    margin-left: auto;
    padding: 0 10px 0 8px;
    color: #ccc;
    border: 2px solid #e8e8e8;
    border-radius: 18px;
}

.filter svg {
    margin-right: 14px;
}

.filter input::placeholder {
    color: #ccc;
}

.grid-box {
    flex: 1;
    min-height: 0;
    overflow: hidden;
}

.grid {
    width: 100%;
    table-layout: fixed;
    border-collapse: separate;
    border-spacing: 0;
    border-right: 2px solid #d6d8d9;
}

.grid th {
    height: 45px;
    padding-left: 8px;
    font-size: 20px;
    font-weight: normal;
    text-align: left;
    color: #666;
    background: #ebeef1;
    border: solid #d6d8d9;
    border-width: 2px 0 2px 2px;
}

.grid td {
    height: 44px;
    border-left: 2px solid #d6d8d9;
}

.grid tr:nth-child(even) td {
    background: #f3f6fb;
}

.grid-foot {
    display: flex;
    align-items: center;
    flex: none;
    height: 54px;
    padding: 3px 6px 0 7px;
    font-weight: bold;
    color: #666;
    background: #ebeef1;
    border: 2px solid #d6d8d9;
    border-top-width: 3px;
}

.grid-foot span {
    margin-left: auto;
}

.grid-foot svg {
    width: 32px;
    height: 28px;
}

.grid-foot .export {
    display: flex;
    align-items: center;
    margin-left: 22px;
}

.detail .splitter {
    margin: 20px 0 18px;
}

.shade {
    flex: none;
    height: 62px;
    background: linear-gradient(#f4f4f4, #fff 90%);
}

.forms {
    display: grid;
    grid-template-columns: 1fr 1fr;
    gap: 12px;
    flex: none;
}

.forms dl {
    border: 2px solid #e3e3e3;
}

.forms dl > div {
    display: flex;
    height: 51px;
    border-top: 1px solid #e3e3e3;
}

.forms dl > div + div {
    border-top-width: 3px;
}

.forms dt {
    width: 311px;
    padding: 7px 0 0 15px;
    color: #4d4d4d;
    background: #e4eff6;
}

.forms dl + dl dt {
    width: 295px;
}

.rules {
    flex: none;
    margin-top: 22px;
    border-bottom: 2px solid #d6d8d9;
}

.rules td {
    height: 39px;
}

/* right column */
.side {
    flex: none;
    width: 439px;
    background: #e8e9ee;
}

.side .panel-head {
    justify-content: flex-end;
    padding: 2px 10px 0 0;
}

.portlet {
    position: relative;
    flex: none;
    display: flex;
    flex-direction: column;
    margin: 10px 3px 0 4px;
    overflow: hidden;
    border: 2px solid #a8a8a8;
    border-radius: 16px;
}

.portlet-head {
    display: flex;
    align-items: center;
    height: 49px;
    padding-right: 12px;
    background: linear-gradient(#e0e1e5, #b6b7bb);
    border-bottom: 1px solid #8e8e90;
}

.portlet-head .caret {
    margin: 0 17px 0 18px;
}

.portlet-head > svg {
    width: 30px;
    height: 32px;
}

.portlet-head h3 {
    flex: 1;
    margin-left: 13px;
    font-size: 24px;
}

.max {
    width: 20px;
    height: 18px;
}

.portlet-tabs {
    display: flex;
    align-items: flex-end;
    height: 62px;
    padding-left: 10px;
    background: linear-gradient(#b4b5b8, #b4b5b8) bottom / 100% 2px no-repeat #dadbdf;
}

.portlet-tabs a {
    height: 50px;
    padding: 0 42px;
    line-height: 46px;
}

.portlet-tabs .current {
    padding: 0 30px;
    background: #e8e9ee;
    border: 2px solid #999;
    border-bottom: 0;
    border-radius: 10px 10px 0 0;
    line-height: 47px;
}

.portlet-tabs a:last-child {
    padding-left: 38px;
}

.tasks .portlet-body {
    height: 353px;
    background: #fff;
}

.task-bar {
    display: flex;
    justify-content: space-between;
    height: 40px;
    padding: 0 7px 0 6px;
    line-height: 34px;
    background: #dadbdf;
}

.task-bar button {
    height: 34px;
}

.task-bar a {
    color: #33689c;
}

.portlet-foot {
    height: 16px;
}

.portlet-foot svg {
    position: absolute;
    right: 2px;
    bottom: 1px;
    width: 18px;
    height: 20px;
}

.wip .portlet-body {
    height: 207px;
    background: #fff;
}

.alarms .portlet-head {
    height: 48px;
}

.alarms .portlet-tabs {
    height: 60px;
}

.alarms .portlet-tabs a {
    padding: 0 22px;
}

.alarms .portlet-tabs .current {
    padding: 0 33px;
}

.alarms .portlet-body {
    height: 329px;
    background: repeating-linear-gradient(transparent 0 45px, #f0f0f2 45px 47px) top / 100% 282px no-repeat;
}

/* taskbar */
.taskbar {
    display: flex;
    flex: none;
    gap: 2px;
    height: 13px;
    overflow: hidden;
    background: linear-gradient(90deg, #555 130px, #4f7475 180px, #5f7473 260px, #4d7779 330px, #646f69 420px, #5a7b7f 640px, #53727a 900px, #6d8f89 1200px, #4e7a7f 1350px, #6f8784 1430px, #585858 1520px);
}

.taskbar button {
    flex: none;
    height: 14px;
}

.taskbar svg {
    height: 13px;
}

.plain {
    width: 96px;
}

.task {
    width: 193px;
    padding-left: 6px;
    background: rgba(255, 255, 255, .15);
    border: 1px solid rgba(255, 255, 255, .4);
}

.task.blue {
    background: rgba(80, 140, 180, .3);
    border-top: 2px solid #4a86b8;
}

.task.light {
    background: rgba(200, 225, 215, .5);
    border-color: #fff;
}

.task.gray {
    background: #777;
}
```
